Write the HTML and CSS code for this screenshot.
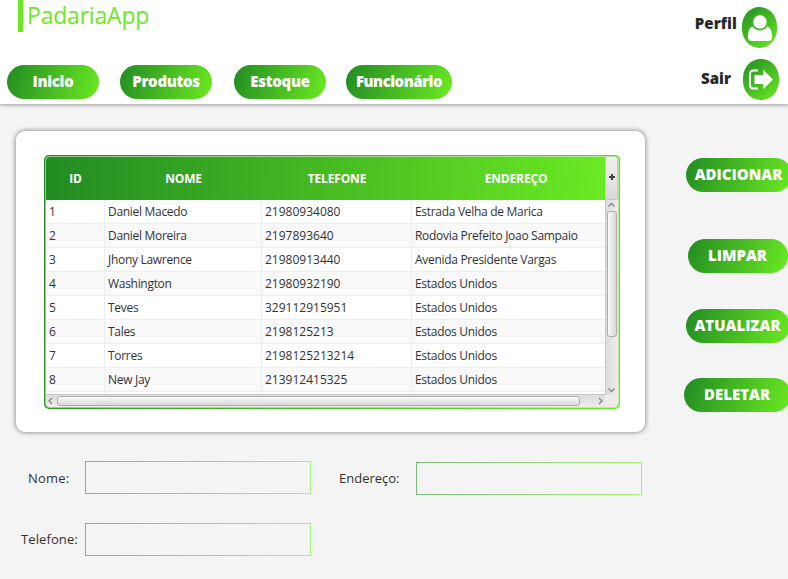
FILE: index.html
```html
<!DOCTYPE html>
<html lang="pt-BR">
<head>
<meta charset="utf-8">
<title>PadariaApp</title>
<link rel="stylesheet" href="styles.css">
</head>
<body>
<header class="topbar">
  <div class="topbar-main">
    <div class="brand"><span>PadariaApp</span></div>
    <nav class="nav">
      <button class="pill"><span class="t-inicio">Inicio</span></button>
      <button class="pill"><span class="t-produtos">Produtos</span></button>
      <button class="pill pill-estoque"><span class="t-estoque">Estoque</span></button>
      <button class="pill pill-func"><span class="t-func">Funcionário</span></button>
    </nav>
  </div>
  <div class="account">
    <div class="account-item perfil"><span>Perfil</span>
      <button class="icon-button"><svg width="26" height="28" viewBox="0 0 26 28" fill="#fff"><path d="M5.800 12.500C7.500 15.200 10 16.500 13 16.500s5.500-1.300 7.200-4C23.500 13.500 25 17 25 23c0 2.800-1 4-3.500 4h-17C2 27 1 25.800 1 23 1 17 2.500 13.500 5.800 12.500Z"/><circle cx="13" cy="8" r="7.200" stroke="#42b822" stroke-width="1"/></svg></button>
    </div>
    <div class="account-item sair"><span>Sair</span>
      <button class="icon-button"><svg width="26" height="24" viewBox="0 0 26 24"><path d="M10 2.500H5.500Q2 2.500 2 6V17Q2 20.500 5.500 20.500H10" fill="none" stroke="#fff" stroke-width="2"/><path d="M6.500 7h8.500V1.500L25 11.500 15 21.500V16H6.500Z" fill="#fff"/></svg></button>
    </div>
  </div>
</header>
<main class="content">
  <div class="left">
    <section class="card">
      <div class="table-frame">
        <div class="table-view">
          <div class="head">
            <div>ID</div><div>NOME</div><div>TELEFONE</div><div>ENDEREÇO</div>
          </div>
          <div class="rows">
            <div class="row"><div>1</div><div>Daniel Macedo</div><div>21980934080</div><div>Estrada Velha de Marica</div></div>
            <div class="row"><div>2</div><div>Daniel Moreira</div><div>2197893640</div><div>Rodovia Prefeito Joao Sampaio</div></div>
            <div class="row"><div>3</div><div>Jhony Lawrence</div><div>21980913440</div><div>Avenida Presidente Vargas</div></div>
            <div class="row"><div>4</div><div>Washington</div><div>21980932190</div><div>Estados Unidos</div></div>
            <div class="row"><div>5</div><div>Teves</div><div>329112915951</div><div>Estados Unidos</div></div>
            <div class="row"><div>6</div><div>Tales</div><div>2198125213</div><div>Estados Unidos</div></div>
            <div class="row"><div>7</div><div>Torres</div><div>2198125213214</div><div>Estados Unidos</div></div>
            <div class="row"><div>8</div><div>New Jay</div><div>213912415325</div><div>Estados Unidos</div></div>
            <div class="row"><div></div><div></div><div></div><div></div></div>
          </div>
          <div class="hscroll">
            <svg width="11" height="12" viewBox="0 0 11 12"><path d="M6 3 3 6l3 3"/></svg>
            <div class="hthumb"></div>
            <svg class="harrow-right" width="11" height="12" viewBox="0 0 11 12"><path d="m4 3 3 3-3 3"/></svg>
          </div>
        </div>
        <div class="side">
          <button class="menu-button"><svg width="6" height="6" viewBox="0 0 6 6"><path d="M3 0v6M0 3h6"/></svg></button>
          <div class="vscroll">
            <svg width="13" height="10" viewBox="0 0 13 10"><path d="m3.500 6.500 3-3 3 3"/></svg>
            <div class="vthumb"></div>
            <svg class="varrow-down" width="13" height="10" viewBox="0 0 13 10"><path d="m3.500 3.500 3 3 3-3"/></svg>
          </div>
        </div>
      </div>
    </section>
    <form class="form">
      <label class="l-nome" for="nome">Nome:</label><input id="nome" type="text">
      <label class="l-end" for="endereco">Endereço:</label><input class="f-end" id="endereco" type="text">
      <label class="l-tel" for="telefone">Telefone:</label><input id="telefone" type="text">
    </form>
  </div>
  <aside class="actions">
    <button class="pill b-add"><span>ADICIONAR</span></button>
    <button class="pill b-clear"><span>LIMPAR</span></button>
    <button class="pill b-update"><span>ATUALIZAR</span></button>
    <button class="pill b-delete"><span>DELETAR</span></button>
  </aside>
</main>
</body>
</html>
```
FILE: styles.css
```css
* { box-sizing: border-box; }
body {
  margin: 0;
  width: 788px;
  height: 579px;
  overflow: hidden;
  background: #f4f4f4;
  color: #333;
  font: 12px/16px "Open Sans", "Noto Sans", sans-serif;
}
button { border: 0; padding: 0; font: inherit; color: inherit; background: none; }
span { display: inline-block; white-space: nowrap; }
.topbar {
  position: relative;
  display: flex;
  justify-content: space-between;
  height: 104px;
  background: #fff;
  box-shadow: 0 0 4px 1px #999;
}
.brand {
  width: 160px;
  height: 32px;
  margin-left: 18px;
  border-left: 5px solid #6be824;
  padding-left: 4px;
  color: #6be824;
  font-size: 23px;
  font-weight: 400;
  line-height: 31px;
  letter-spacing: -0.2px;
}
.brand span { height: 31px; }
.nav { display: flex; padding: 33px 0 0 7px; }
.pill {
  flex: none;
  display: flex;
  align-items: center;
  justify-content: center;
  width: 92px;
  height: 34px;
  margin-right: 21px;
  border-radius: 17px;
  background: linear-gradient(110deg, #228b22, #6bea22);
  color: #fff;
  font-size: 15px;
  font-weight: 800;
  line-height: 20px;
}
.pill span { margin-bottom: 2px; }
.nav .pill { letter-spacing: -0.3px; }
.nav .pill:nth-child(2) { margin-right: 22px; }
.nav .pill-estoque { margin-right: 20px; }
.nav .pill-func { width: 106px; margin: -0.5px 0 0; letter-spacing: -0.5px; }
.account { width: 100px; padding: 7px 9px 0 0; color: #292929; font-size: 15px; font-weight: 800; }
.account-item { display: flex; justify-content: flex-end; height: 41px; }
.account-item > span { margin-top: 8px; }
.perfil { margin: 0 2px 11px 0; }
.perfil > span { margin-right: 5px; letter-spacing: 0.1px; }
.sair > span { margin: 11px 12px 0 0; }
.icon-button {
  display: flex;
  align-items: center;
  justify-content: center;
  width: 35px;
  height: 41px;
  border-radius: 17.5px / 19px;
  background: linear-gradient(140deg, #228b22, #6bea22);
}
.sair .icon-button { width: 36px; }
.content { display: flex; }
.left { width: 684px; padding: 27px 0 0 16px; }
.card {
  width: 629px;
  height: 301px;
  padding: 24px 28px;
  border-radius: 9px;
  background: #fff;
  box-shadow: 0 0 4px 1px #999;
}
.table-frame {
  position: relative;
  display: flex;
  width: 576px;
  height: 254px;
  padding: 2px;
  border-radius: 5px;
  background: linear-gradient(114deg, #228b22, #6bea22);
  overflow: hidden;
}
.table-frame::after {
  content: "";
  position: absolute;
  inset: 1px;
  border: 1px solid rgba(255, 255, 255, 0.5);
  border-radius: 4px;
  pointer-events: none;
}
.table-view { width: 559px; height: 250px; border-radius: 4px 0 0 4px; overflow: hidden; background: #fff; }
.head, .row { display: grid; grid-template-columns: 59px 157px 150px 193px; }
.head {
  grid-template-columns: 59px 157px 150px 208px;
  height: 43px;
  align-items: center;
  background: linear-gradient(94.4deg, #228b22, #6bea22);
  color: #fff;
  font-weight: 700;
  letter-spacing: -0.15px;
  text-align: center;
}
.rows { height: 194px; overflow: hidden; }
.row { height: 24px; background: #fff; border-bottom: 1px solid #ededed; line-height: 23px; }
.row:nth-child(even) { background: #f9f9f9; }
.row div { border-right: 1px solid #ededed; padding-left: 3px; white-space: nowrap; }
.row div:nth-child(even) { letter-spacing: -0.3px; }
.row div:last-child { border-right: 0; }
.hscroll { display: flex; height: 13px; border-top: 1px solid #c8c8c8; background: linear-gradient(#dcdcdc, #ececec); }
svg { flex: none; display: block; }
.hscroll path, .vscroll path { fill: none; stroke: #858585; stroke-width: 1.3; }
.hthumb { flex: none; width: 523px; height: 10px; margin-top: 1px; border: 1px solid #adadad; border-radius: 3px; background: linear-gradient(#fafafa, #d8d8d8); }
.harrow-right { margin-left: 15px; }
.side { width: 13px; background: #ececec; border-radius: 0 4px 4px 0; overflow: hidden; }
.menu-button { display: flex; align-items: center; justify-content: center; width: 13px; height: 43px; padding-bottom: 4px; border: 1px solid #c8c8c8; border-top-color: #eee; background: linear-gradient(#f0f0f0, #d9d9d9); }
.menu-button path { stroke: #444; stroke-width: 2; }
.vscroll { height: 195px; border-left: 1px solid #c8c8c8; background: linear-gradient(to right, #dcdcdc, #ececec); }
.vscroll svg { margin-left: -1px; }
.vthumb { width: 10px; height: 126px; margin: 1px 0 0 1px; border: 1px solid #adadad; border-radius: 3px; background: linear-gradient(to right, #fafafa, #d8d8d8); }
.varrow-down { margin-top: 48px; }
.form {
  display: grid;
  grid-template-columns: 69px 226px 105px 226px;
  grid-template-rows: 34px 33px;
  row-gap: 28px;
  margin-top: 29px;
  font-size: 13px;
}
.form label { line-height: 35px; white-space: nowrap; }
.l-nome { padding-left: 12px; letter-spacing: 0.2px; }
.l-end { padding-left: 28px; }
.l-tel { padding-left: 5px; letter-spacing: 0.1px; }
.form .l-tel { line-height: 33px; }
.form input { width: 226px; height: 33px; border: 1px solid; border-image: linear-gradient(98.300deg, #7cbb7c, #a7f27c) 1; background: none; }
.form .f-end { margin-top: 1px; }
.actions { width: 104px; padding-top: 54px; overflow: hidden; }
.actions .pill { margin: 0 0 0 2px; }
.actions .pill span { margin-right: 1px; }
.actions .b-add { width: 106px; }
.actions .b-clear { width: 100px; margin: 47px 0 0 4px; }
.actions .b-update { width: 104px; margin-top: 36px; }
.actions .b-delete { width: 107px; margin: 35px 0 0; }
```
